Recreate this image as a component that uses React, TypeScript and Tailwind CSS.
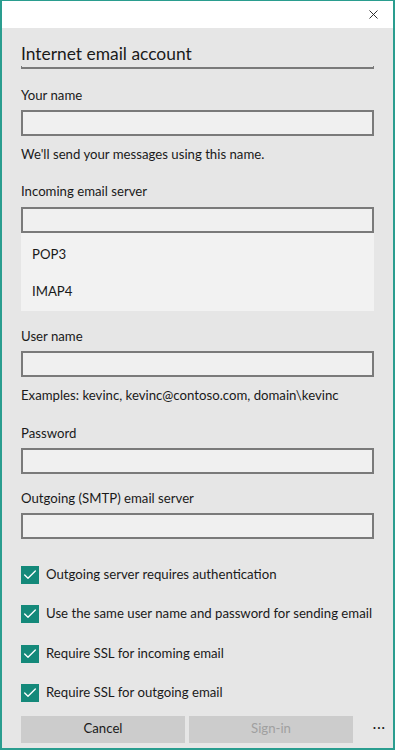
import { Check, X } from 'lucide-react';

const font = { fontFamily: 'Lato, "Noto Sans", sans-serif' };

function Field({ label, hint, inputTop = 6 }: { label: string; hint?: string; inputTop?: number }) {
  return (
    <div className="flex flex-col">
      <div className="text-[13.2px] leading-[18px] text-[#1a1a1a]">{label}</div>
      <div
        className={`${inputTop === 7 ? 'mt-[7px]' : 'mt-[6px]'} h-[26px] border-2 border-[#7a7a7a] bg-[#f0f0f0]`}
      />
      {hint && <div className="mt-[9px] text-[13.2px] leading-[18px] text-[#1a1a1a]">{hint}</div>}
    </div>
  );
}

function CheckRow({ label }: { label: string }) {
  return (
    <div className="flex items-center gap-[7px] h-[20px]">
      <div className="w-[18px] h-[18px] bg-[#14897a] flex items-center justify-center shrink-0">
        <Check size={16} strokeWidth={2} className="text-white" />
      </div>
      <span className="text-[13.2px] text-[#1a1a1a] whitespace-nowrap">{label}</span>
    </div>
  );
}

export default function App() {
  return (
    <div style={font} className="w-[395px] h-[750px] bg-[#2a9d8f] p-[2px] pt-[1px] flex flex-col overflow-hidden">
      {/* title bar */}
      <div className="h-[27px] bg-white flex items-center justify-end pr-[12px] shrink-0">
        <X size={15} strokeWidth={1.5} className="text-[#222]" />
      </div>

      <div className="flex-1 bg-[#e6e6e6] px-[19px] flex flex-col">
        <div className="pt-[15px] text-[17.4px] leading-[22px] text-[#1a1a1a]">Internet email account</div>
        <div className="mt-[1px] h-[3px] border-x border-b-2 border-[#7a7a7a]" />

        <div className="mt-[17px]">
          <Field label="Your name" hint="We'll send your messages using this name." />
        </div>

        <div className="mt-[19px]">
          <Field label="Incoming email server" inputTop={7} />
          <div className="bg-[#f2f2f2] flex flex-col text-[13.2px] text-[#1a1a1a] pl-[11px]">
            <div className="h-[40px] flex items-center pt-[3px]">POP3</div>
            <div className="h-[38px] flex items-center">IMAP4</div>
          </div>
        </div>

        <div className="mt-[16px]">
          <Field label="User name" hint="Examples: kevinc, kevinc@contoso.com, domain\kevinc" />
        </div>

        <div className="mt-[20px]">
          <Field label="Password" />
        </div>

        <div className="mt-[15px]">
          <Field label="Outgoing (SMTP) email server" />
        </div>

        <div className="mt-[26px] flex flex-col gap-[19.3px]">
          <CheckRow label="Outgoing server requires authentication" />
          <CheckRow label="Use the same user name and password for sending email" />
          <CheckRow label="Require SSL for incoming email" />
          <CheckRow label="Require SSL for outgoing email" />
        </div>

        <div className="mt-[13px] flex items-center gap-[4px]">
          <div className="w-[164px] h-[27px] bg-[#cccccc] flex items-center justify-center text-[13.2px] text-[#1a1a1a]">Cancel</div>
          <div className="w-[164px] h-[27px] bg-[#cccccc] flex items-center justify-center text-[13.2px] text-[#a0a0a0]">Sign-in</div>
          <div className="flex-1 flex justify-end -mr-[12px] text-[13px] text-[#1a1a1a] tracking-[1px] leading-none pb-[4px]">···</div>
        </div>
      </div>
    </div>
  );
}
